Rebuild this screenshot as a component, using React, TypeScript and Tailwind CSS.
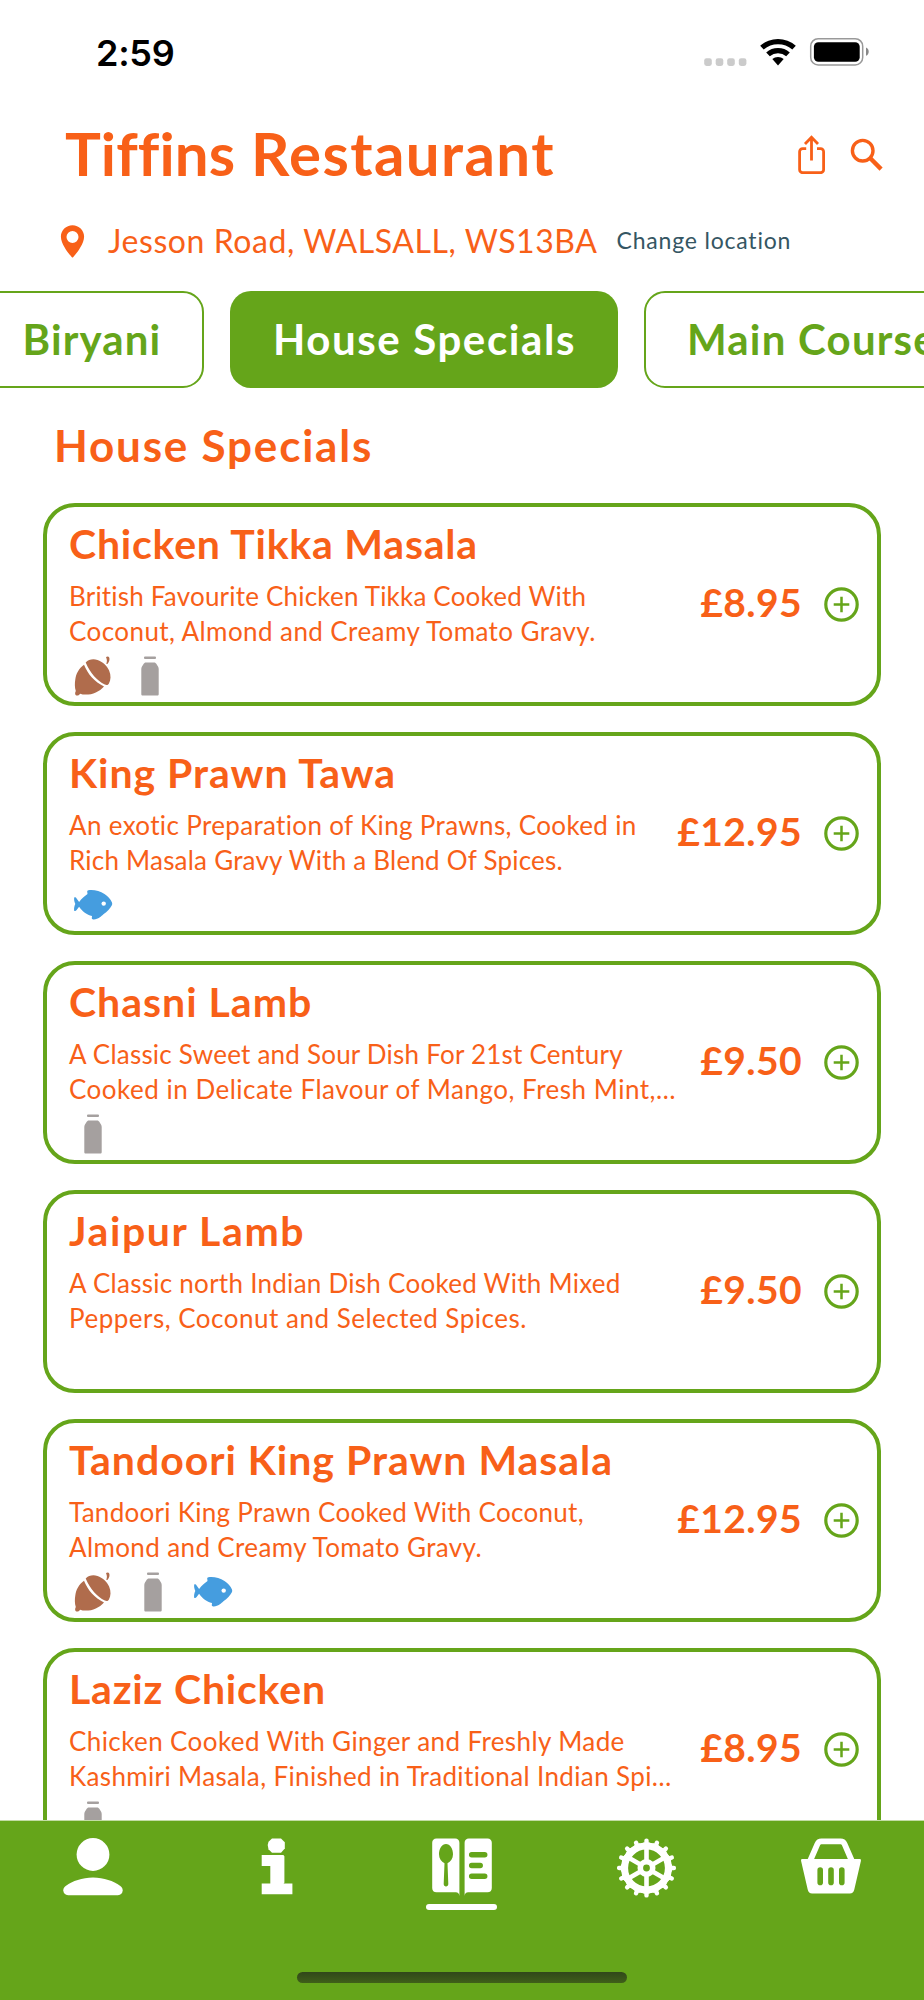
import React from "react";

type Allergen = "nut" | "milk" | "fish";

interface Dish {
    id: number;
    name: string;
    nameTracking: string;
    lines: { text: string; tracking: string }[];
    price: string;
    allergens: Allergen[];
}

const dishes: Dish[] = [
    {
        id: 1,
        name: "Chicken Tikka Masala",
        nameTracking: "tracking-[0.78px]",
        lines: [
            { text: "British Favourite Chicken Tikka Cooked With", tracking: "tracking-[0.2px]" },
            { text: "Coconut, Almond and Creamy Tomato Gravy.", tracking: "tracking-[0.42px]" },
        ],
        price: "£8.95",
        allergens: ["nut", "milk"],
    },
    {
        id: 2,
        name: "King Prawn Tawa",
        nameTracking: "tracking-[0.95px]",
        lines: [
            { text: "An exotic Preparation of King Prawns, Cooked in", tracking: "tracking-[0.34px]" },
            { text: "Rich Masala Gravy With a Blend Of Spices.", tracking: "tracking-[0.22px]" },
        ],
        price: "£12.95",
        allergens: ["fish"],
    },
    {
        id: 3,
        name: "Chasni Lamb",
        nameTracking: "tracking-[1px]",
        lines: [
            { text: "A Classic Sweet and Sour Dish For 21st Century", tracking: "tracking-[0.22px]" },
            { text: "Cooked in Delicate Flavour of Mango, Fresh Mint,…", tracking: "tracking-[0.5px]" },
        ],
        price: "£9.50",
        allergens: ["milk"],
    },
    {
        id: 4,
        name: "Jaipur Lamb",
        nameTracking: "tracking-[1.6px]",
        lines: [
            { text: "A Classic north Indian Dish Cooked With Mixed", tracking: "tracking-[0.27px]" },
            { text: "Peppers, Coconut and Selected Spices.", tracking: "tracking-[0.5px]" },
        ],
        price: "£9.50",
        allergens: [],
    },
    {
        id: 5,
        name: "Tandoori King Prawn Masala",
        nameTracking: "tracking-[0.97px]",
        lines: [
            { text: "Tandoori King Prawn Cooked With Coconut,", tracking: "tracking-[0.28px]" },
            { text: "Almond and Creamy Tomato Gravy.", tracking: "tracking-[0.38px]" },
        ],
        price: "£12.95",
        allergens: ["nut", "milk", "fish"],
    },
    {
        id: 6,
        name: "Laziz Chicken",
        nameTracking: "tracking-[0.8px]",
        lines: [
            { text: "Chicken Cooked With Ginger and Freshly Made", tracking: "tracking-[0.4px]" },
            { text: "Kashmiri Masala, Finished in Traditional Indian Spi…", tracking: "tracking-[0.36px]" },
        ],
        price: "£8.95",
        allergens: ["milk"],
    },
];

const NutIcon = () => (
    <svg className="size-10" viewBox="0 0 40 40" fill="#b06c4c">
        <path d="M12.7 6.4C15.5 3.6 20 2.5 24.5 4c5 1.6 9.500 5.800 11.600 10.500 2 4.600 1.900 9.500-.3 13.200-.9 1.500-2.300 1.600-4 .8C24.300 24.700 17.300 17.300 12.700 6.400z" />
        <path d="M11 8.800C15 18.500 21.500 25.800 31 30.400c-4.500 5.200-11.500 8.300-18.500 8.200-2 0-3.700-.3-5.300-.9-1.300 1.700-3 2.200-4.300 1.600-1-.6-1-2.700-.1-4.300C1.600 31.800 1.700 27 2.300 23.500c.7-5.500 3.500-11 8.700-14.700z" />
        <path d="M33 1.100c1.300-.7 2.600-.7 3.100.2.9 2 .3 4.700-1.700 6.700-.5.300-1 0-1-.6.700-1.800.8-3.400-.4-6.300z" />
    </svg>
);

const MilkIcon = () => (
    <svg className="size-10" viewBox="0 0 40 40" fill="#a5a09f">
        <rect x="14" y=".4" width="12" height="2.700" rx="1" />
        <path d="M16 6.400h8c1 0 1.600.4 2.100 1.200l1.900 3c.5.800.7 1.600.7 2.500v25c0 1-.5 1.500-1.400 1.500H12.700c-.9 0-1.400-.5-1.400-1.500v-25c0-.9.2-1.700.7-2.500l1.900-3c.5-.8 1.100-1.200 2.100-1.200z" />
    </svg>
);

const FishIcon = () => (
    <svg className="size-10" viewBox="0 0 40 40">
        <path
            fill="#459ddf"
            d="M1.200 12.600c1-.8 1.800-.3 2.400.8l2.500 3.500c2.600-3 5.400-5.700 8.400-7.800l-.3-2.600c0-.8.3-1.200 1.200-1.300 5.600-.8 11.300.9 16.100 3.700 3.200 2 6.100 5.200 7.500 8.500.3.900.3 1.800 0 2.700-1.700 3.600-5 6.700-8.300 9-2.600 2.400-5.300 5.200-9.900 5.300-1.500.1-2-.3-2-1.400l.2-2.100c-5.200-.9-9.600-4.700-12.900-9.200l-2.500 3.400c-.8 1-2 1.200-2.500.3-.2-2.200.2-4.300 1.200-6.400-1-2.100-1.400-4.200-1.100-6.400z"
        />
        <circle cx="30.700" cy="18.600" r="2.200" fill="#fff" />
    </svg>
);

const allergenIcons = { nut: NutIcon, milk: MilkIcon, fish: FishIcon };

const StatusBar = () => (
    <div className="flex h-[104px] shrink-0 items-center justify-between pr-[55px] pl-[96px]">
        <span className="pt-px font-['Inter',sans-serif] text-[36px] leading-none font-semibold tracking-[-0.3px] text-black">2:59</span>
        <svg className="h-[30px] w-[165px]" viewBox="0 0 165 30">
            {[0.2, 11.7, 23.2, 34.8].map((x) => (
                <rect key={x} x={x} y="21.300" width="7.600" height="7.600" rx="2.300" fill="#cbcbcb" />
            ))}
            <g>
                <path d="M56.200 8.700a27.200 27.200 0 0 1 35.600 0l-3.500 3.900a22 22 0 0 0-28.600 0z" />
                <path d="M62.200 15.400a18.200 18.200 0 0 1 23.600 0l-3.600 3.900a12.800 12.800 0 0 0-16.400 0z" />
                <path d="M68.300 22.100a9 9 0 0 1 11.400 0L74 28.400z" />
            </g>
            <rect x="106.700" y="1.700" width="52" height="26.200" rx="7.500" fill="none" stroke="#999" strokeWidth="1.500" />
            <rect x="109.900" y="5.200" width="45.800" height="19.600" rx="4.500" />
            <path d="M162 10.600v8.200c1.700-.7 2.700-2.200 2.700-4.100s-1-3.400-2.700-4.100z" fill="#888" />
        </svg>
    </div>
);

const Header = () => (
    <header className="shrink-0">
        <div className="flex h-24 items-center justify-between pr-[41px] pl-[65px]">
            <h1 className="pt-[2px] text-[60px] leading-none font-bold tracking-[1.4px]">
                <span className="tracking-[0.1px]">Tiffins</span> Restaurant
            </h1>
            <div className="flex items-center gap-[25px] pt-[5px]">
                <svg className="h-[39px] w-[27px]" viewBox="0 0 27 39" fill="none" stroke="currentColor" strokeWidth="2.800">
                    <path d="M8.200 13.700H4.600a3 3 0 0 0-3 3v18a3 3 0 0 0 3 3h18a3 3 0 0 0 3-3v-18a3 3 0 0 0-3-3H19" />
                    <path d="M13.500 25.500V2.500M7 9l6.500-6.700L20 9" />
                </svg>
                <svg className="size-[33px]" viewBox="0 0 33 33" fill="none" stroke="currentColor">
                    <circle cx="12.700" cy="12.700" r="10.300" strokeWidth="3.400" />
                    <path d="M20.300 20.300l10.800 10.800" strokeWidth="4.400" />
                </svg>
            </div>
        </div>
        <div className="flex h-20 items-center pl-[60px]">
            <svg className="mt-[3px] h-[33px] w-[25px]" viewBox="0 0 25 33" fill="currentColor">
                <path
                    fillRule="evenodd"
                    d="M12.500.2C6.100.2.900 5.200.9 11.500c0 7.900 8.100 17.500 11 20.800.4.400.8.400 1.200 0 2.900-3.300 11-12.900 11-20.800C24.100 5.200 18.900.2 12.500.2zm0 17.700a6 6 0 1 1 0-12 6 6 0 0 1 0 12z"
                />
            </svg>
            <span className="ml-[23px] pt-[2px] text-[32px] tracking-[0.57px]">Jesson Road, WALSALL, WS13BA</span>
            <span className="ml-[19px] pt-px text-[23px] tracking-[0.8px] text-[#355663]">Change location</span>
        </div>
    </header>
);

const CategoryTabs = () => (
    <div className="mt-[11px] flex h-[97px] shrink-0 gap-[26px] overflow-hidden text-[42px] leading-none font-bold whitespace-nowrap text-[#65a51a]">
        <div className="-ml-[22px] flex w-[226px] shrink-0 items-center justify-center rounded-[21px] border-2 border-[#65a51a] pb-[2px] pl-[2px] tracking-[1.12px]">
            Biryani
        </div>
        <div className="flex w-[388px] shrink-0 items-center justify-center rounded-[21px] bg-[#65a51a] pb-[2px] pl-px tracking-[1.6px] text-white">
            House Specials
        </div>
        <div className="flex w-[388px] shrink-0 items-center rounded-[21px] border-2 border-[#65a51a] pb-[2px] pl-[41px] tracking-[1.2px]">
            Main Courses
        </div>
    </div>
);

const DishCard = ({ dish }: { dish: Dish }) => (
    <div className="flex h-[203px] shrink-0 items-center rounded-[32px] border-4 border-[#65a51a] pr-[18px] pl-[22px]">
        <div className="h-full flex-1 pt-[13px]">
            <h3 className={`h-12 text-[41px] leading-[48px] font-bold whitespace-nowrap ${dish.nameTracking}`}>{dish.name}</h3>
            <div className="mt-[11px] text-[26px] leading-[35px] whitespace-nowrap">
                {dish.lines.map((line) => (
                    <p key={line.text} className={line.tracking}>{line.text}</p>
                ))}
            </div>
            <div className={`mt-[7px] ml-1 flex ${dish.allergens.length > 2 ? "gap-[20px]" : "gap-[17px]"}`}>
                {dish.allergens.map((allergen) => {
                    const Icon = allergenIcons[allergen];
                    return <Icon key={allergen} />;
                })}
            </div>
        </div>
        <span className="pb-[4px] text-[39px] leading-none font-bold tracking-[0.4px]">{dish.price}</span>
        <svg className="ml-[22px] size-[35px]" viewBox="0 0 35 35" fill="none" stroke="#65a51a">
            <circle cx="17.500" cy="17.500" r="15.700" strokeWidth="3.200" />
            <path d="M17.500 9.700v15.600M9.700 17.500h15.600" strokeWidth="2.500" />
        </svg>
    </div>
);

const NavBar = () => (
    <nav className="flex h-[180px] shrink-0 flex-col justify-between border-t border-[#c3dca3] bg-[#65a51a] pb-[17px]">
        <div className="grid grid-cols-5 justify-items-center pt-[17px]">
            <svg className="ml-px size-[60px]" viewBox="0 0 60 60" fill="#fff">
                <circle cx="30" cy="16.500" r="16.400" />
                <path d="M30 39.600c11 0 20.500 3.600 27 8.200 1.800 1.300 2.700 2.700 2.700 4.500 0 2.900-1.900 4.900-4.800 4.900H5.100c-2.900 0-4.800-2-4.800-4.900 0-1.800.9-3.200 2.700-4.500 6.500-4.600 16-8.200 27-8.200z" />
            </svg>
            <svg className="size-[60px]" viewBox="0 0 60 60" fill="#fff">
                <path d="M25 .4h9l3.800 3.800v6.200L34 14.700h-9l-3.500-3.400-.8-4.300.8-3.200z" />
                <path d="M14.700 17.100h21.700l1 1.100v26.600l-.9.700h8.900v10.700H14.700V45.500h8.600V28h-8.600z" />
            </svg>
            <div className="flex flex-col items-center gap-[6px]">
                <svg className="size-[60px]" viewBox="0 0 60 60" fill="#fff">
                    <path
                        fillRule="evenodd"
                        d="M4.500.4h18.600c2.700 0 4.300 1.600 4.300 4.300V58c-.3-2.500-1.300-3.700-3.600-3.700H4.500C1.800 54.300.2 52.700.2 50V4.700C.2 2 1.800.4 4.500.4zM14 6c-4 0-7 4.800-7 10.200 0 4.200 2.300 7.200 5.500 9l-.8 20.900c0 1.600.9 2.500 2.300 2.500s2.300-.9 2.300-2.500l-.8-20.900c3.200-1.800 5.500-4.800 5.500-9C21 10.800 18 6 14 6z"
                    />
                    <path d="M36.900.4h18.600c2.700 0 4.300 1.600 4.300 4.300V50c0 2.700-1.600 4.300-4.300 4.300H36.200c-2.300 0-3.300 1.200-3.600 3.700V4.700c0-2.700 1.600-4.300 4.300-4.300z" />
                    <path d="M39.700 16.800h13M39.700 27.600h8.500M39.700 38.300h13" stroke="#65a51a" strokeWidth="5.500" strokeLinecap="round" />
                </svg>
                <div className="h-[6px] w-[71px] rounded-full bg-white" />
            </div>
            <svg className="size-[60px]" viewBox="0 0 60 60" fill="none" stroke="#fff">
                <circle cx="29.500" cy="30" r="21.900" strokeWidth="7" />
                {Array.from({ length: 16 }, (_, i) => (
                    <path
                        key={i}
                        d="M29.500 2.600v4.400M27.500 6.500h4"
                        strokeWidth="4.400"
                        strokeLinecap="round"
                        transform={`rotate(${i * 22.5} 29.500 30)`}
                    />
                ))}
                {[0, 60, 120].map((angle) => (
                    <path key={angle} d="M29.500 10v13M29.500 37v13" strokeWidth="4.600" transform={`rotate(${angle} 29.500 30)`} />
                ))}
                <circle cx="29.500" cy="30" r="6.200" strokeWidth="5.600" />
            </svg>
            <svg className="mr-px size-[60px]" viewBox="0 0 60 60">
                <path d="M9.300 22.500l7.100-16.400c.9-2 2-2.700 4-2.700h19.200c2 0 3.100.7 4 2.700l7.100 16.400" fill="none" stroke="#fff" strokeWidth="5.800" />
                <path d="M1.500 21.100h57c1.200 0 1.600.7 1.400 1.900L53.300 51.500c-.6 2.700-2 3.900-4.400 3.900H11.100c-2.400 0-3.800-1.200-4.400-3.900L.1 23c-.2-1.200.2-1.900 1.400-1.900z" fill="#fff" />
                <path d="M19.200 32v12.400M30 32v12.400M40.800 32v12.400" stroke="#65a51a" strokeWidth="5.600" strokeLinecap="round" />
            </svg>
        </div>
        <div className="mx-auto h-[11px] w-[330px] rounded-full bg-linear-to-b from-[#31471a] to-[#3f5f19]" />
    </nav>
);

const App: React.FC = () => {
    return (
        <div className="flex h-[2000px] w-[924px] flex-col overflow-hidden bg-white font-['Lato',sans-serif] text-[#f86018]">
            <StatusBar />
            <Header />
            <CategoryTabs />
            <main className="min-h-0 flex-1 overflow-hidden">
                <h2 className="h-[115px] pl-[54px] text-[44px] leading-[115px] font-bold tracking-[1.79px]">House Specials</h2>
                <div className="mr-[43px] ml-[43px] flex flex-col gap-[26px]">
                    {dishes.map((dish) => (
                        <DishCard key={dish.id} dish={dish} />
                    ))}
                </div>
            </main>
            <NavBar />
        </div>
    );
};

export default App;
